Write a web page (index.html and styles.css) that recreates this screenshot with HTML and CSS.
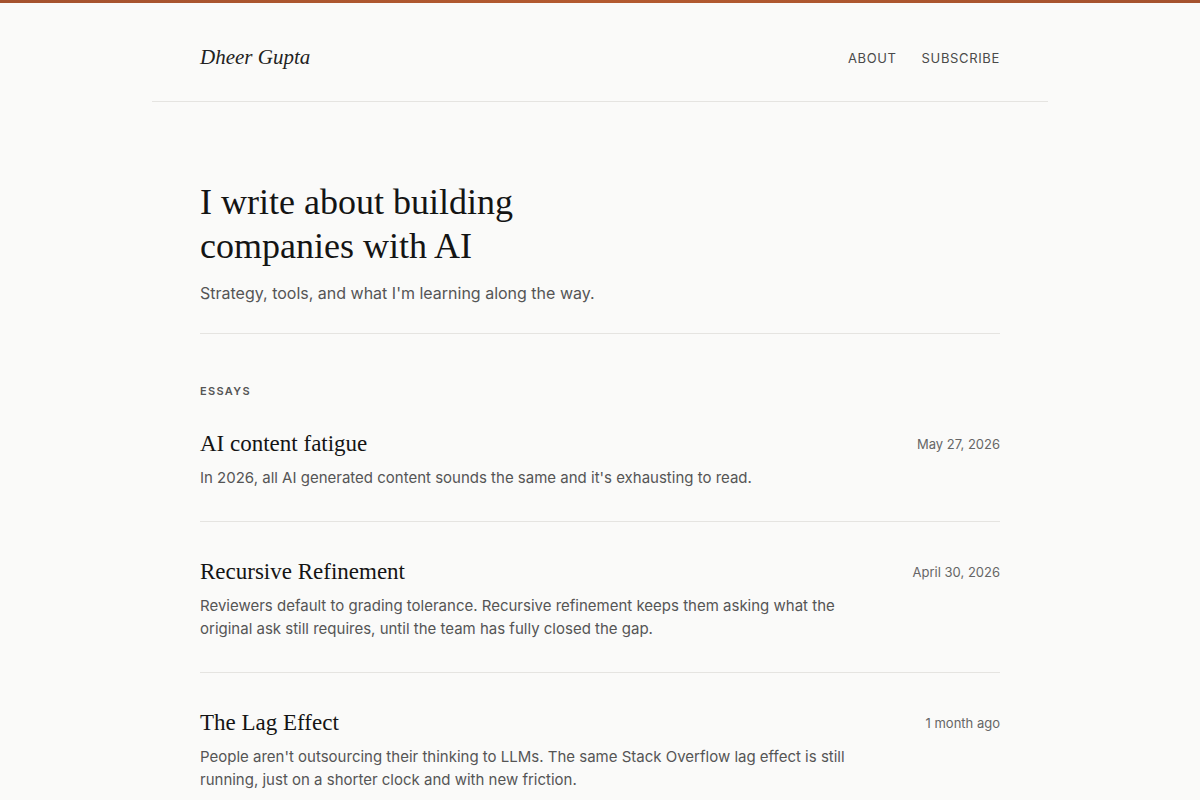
FILE: index.html
```html
<!DOCTYPE html>
<html lang="en">
<head>
    <meta charset="UTF-8">
    <meta name="viewport" content="width=device-width, initial-scale=1.0">
    <title>Dheer Gupta</title>
    <link rel="stylesheet" href="styles.css">
</head>
<body>
    <div class="topbar"></div>
    <header class="site-header">
        <a class="brand" href="#">Dheer Gupta</a>
        <nav class="nav">
            <a href="#">About</a>
            <a href="#">Subscribe</a>
        </nav>
    </header>
    <main class="content">
        <section class="hero">
            <h1>I write about building companies with AI</h1>
            <p>Strategy, tools, and what I'm learning along the way.</p>
        </section>
        <section class="essays">
            <h2 class="label">Essays</h2>
            <article class="essay">
                <div class="essay-text">
                    <h3>AI content fatigue</h3>
                    <p>In 2026, all AI generated content sounds the same and it's exhausting to read.</p>
                </div>
                <span class="date">May 27, 2026</span>
            </article>
            <article class="essay">
                <div class="essay-text">
                    <h3>Recursive Refinement</h3>
                    <p>Reviewers default to grading tolerance. Recursive refinement keeps them asking what the original ask still requires, until the team has fully closed the gap.</p>
                </div>
                <span class="date">April 30, 2026</span>
            </article>
            <article class="essay">
                <div class="essay-text">
                    <h3>The Lag Effect</h3>
                    <p>People aren't outsourcing their thinking to LLMs. The same Stack Overflow lag effect is still running, just on a shorter clock and with new friction.</p>
                </div>
                <span class="date">1 month ago</span>
            </article>
        </section>
    </main>
</body>
</html>
```

FILE: styles.css
```css
body {
    margin: 0;
    background-color: #fafaf9;
    color: #1a1a1a;
    font-family: Inter, "Noto Sans", sans-serif;
}
a {
    color: inherit;
    text-decoration: none;
}
.topbar {
    height: 3px;
    background: linear-gradient(90deg, #a4522e, #b35a30 50%, #a4522e);
}
.site-header {
    width: 896px;
    margin: 0 auto;
    box-sizing: border-box;
    padding: 12px 48px 0;
    height: 99px;
    display: flex;
    align-items: center;
    justify-content: space-between;
    border-bottom: 1px solid #e5e4e1;
}
.brand {
    font-family: "Liberation Serif", serif;
    font-style: italic;
    font-size: 21px;
    color: #222;
    margin-top: -2px;
}
.nav {
    display: flex;
    gap: 25px;
}
.nav a {
    font-size: 13px;
    text-transform: uppercase;
    letter-spacing: 0.05em;
    color: #4a4a4a;
}
.content {
    width: 800px;
    margin: 0 auto;
}
.hero {
    padding-top: 78px;
    padding-bottom: 28px;
    border-bottom: 1px solid #e5e4e1;
}
.hero h1 {
    font-family: "Liberation Serif", serif;
    font-weight: normal;
    font-size: 36px;
    line-height: 44px;
    max-width: 340px;
    margin: 0;
    color: #141414;
}
.hero p {
    margin: 13px 0 0;
    font-size: 16px;
    line-height: 24px;
    color: #555;
}
.essays {
    padding-top: 50px;
}
.label {
    margin: 0 0 30px;
    font-size: 11px;
    font-weight: 600;
    letter-spacing: 0.12em;
    text-transform: uppercase;
    color: #555;
}
.essay {
    display: flex;
    justify-content: space-between;
    align-items: flex-start;
    gap: 40px;
    padding: 0 0 32px;
    margin-bottom: 34px;
    border-bottom: 1px solid #e5e4e1;
}
.essay-text {
    max-width: 650px;
}
.essay h3 {
    margin: 0;
    font-family: "Liberation Serif", serif;
    font-weight: normal;
    font-size: 23px;
    line-height: 32px;
    color: #141414;
}
.essay p {
    margin: 6px 0 0;
    font-size: 15px;
    line-height: 23px;
    color: #555;
}
.date {
    flex-shrink: 0;
    font-size: 13px;
    color: #666;
    margin-top: 8px;
}
```
